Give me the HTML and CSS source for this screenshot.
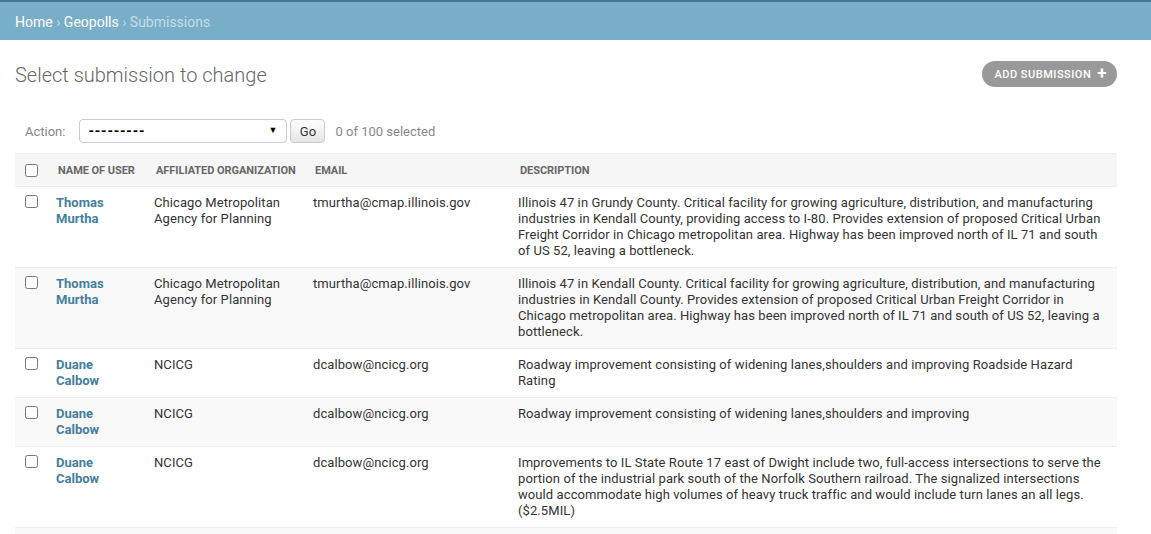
FILE: index.html
```html
<!DOCTYPE html>
<html lang="en">
<head>
<meta charset="utf-8">
<title>Select submission to change</title>
<link rel="stylesheet" href="styles.css">
</head>
<body>
<div class="topline"></div>
<div class="breadcrumbs">
  <a href="#">Home</a> › <a href="#">Geopolls</a> › Submissions
</div>
<div class="content">
  <div class="title-row">
    <h1>Select submission to change</h1>
    <a class="addlink" href="#">Add submission <span class="plus">+</span></a>
  </div>
  <div class="actions">
    <label class="action-label">Action:</label>
    <div class="select-wrap">
      <select class="action-select">
        <option>---------</option>
      </select>
      <span class="select-arrow">▼</span>
    </div>
    <button class="go-button" type="button">Go</button>
    <span class="counter">0 of 100 selected</span>
  </div>
  <table class="result-list">
    <colgroup>
      <col class="c-check">
      <col class="c-name">
      <col class="c-org">
      <col class="c-email">
      <col class="c-desc">
    </colgroup>
    <thead>
      <tr>
        <th class="check-head"><input type="checkbox"></th>
        <th>Name of user</th>
        <th>Affiliated organization</th>
        <th>Email</th>
        <th>Description</th>
      </tr>
    </thead>
    <tbody>
      <tr class="row1">
        <td class="check-cell"><input type="checkbox"></td>
        <th class="name-cell"><a href="#">Thomas Murtha</a></th>
        <td>Chicago Metropolitan Agency for Planning</td>
        <td>tmurtha@cmap.illinois.gov</td>
        <td>Illinois 47 in Grundy County. Critical facility for growing agriculture, distribution, and manufacturing industries in Kendall County, providing access to I-80. Provides extension of proposed Critical Urban Freight Corridor in Chicago metropolitan area. Highway has been improved north of IL 71 and south of US 52, leaving a bottleneck.</td>
      </tr>
      <tr class="row2">
        <td class="check-cell"><input type="checkbox"></td>
        <th class="name-cell"><a href="#">Thomas Murtha</a></th>
        <td>Chicago Metropolitan Agency for Planning</td>
        <td>tmurtha@cmap.illinois.gov</td>
        <td>Illinois 47 in Kendall County. Critical facility for growing agriculture, distribution, and manufacturing industries in Kendall County. Provides extension of proposed Critical Urban Freight Corridor in Chicago metropolitan area. Highway has been improved north of IL 71 and south of US 52, leaving a bottleneck.</td>
      </tr>
      <tr class="row1">
        <td class="check-cell"><input type="checkbox"></td>
        <th class="name-cell"><a href="#">Duane Calbow</a></th>
        <td>NCICG</td>
        <td>dcalbow@ncicg.org</td>
        <td>Roadway improvement consisting of widening lanes,shoulders and improving Roadside Hazard Rating</td>
      </tr>
      <tr class="row2">
        <td class="check-cell"><input type="checkbox"></td>
        <th class="name-cell"><a href="#">Duane Calbow</a></th>
        <td>NCICG</td>
        <td>dcalbow@ncicg.org</td>
        <td>Roadway improvement consisting of widening lanes,shoulders and improving</td>
      </tr>
      <tr class="row1">
        <td class="check-cell"><input type="checkbox"></td>
        <th class="name-cell"><a href="#">Duane Calbow</a></th>
        <td>NCICG</td>
        <td>dcalbow@ncicg.org</td>
        <td>Improvements to IL State Route 17 east of Dwight include two, full-access intersections to serve the portion of the industrial park south of the Norfolk Southern railroad. The signalized intersections would accommodate high volumes of heavy truck traffic and would include turn lanes an all legs. ($2.5MIL)</td>
      </tr>
      <tr class="row2">
        <td class="check-cell"><input type="checkbox"></td>
        <th class="name-cell"><a href="#">Duane Calbow</a></th>
        <td>NCICG</td>
        <td>dcalbow@ncicg.org</td>
        <td>Roadway improvement consisting of widening lanes and shoulders</td>
      </tr>
    </tbody>
  </table>
</div>
</body>
</html>
```
FILE: styles.css
```css
html, body {
  margin: 0;
  padding: 0;
  background: #fff;
}
body {
  font-family: Roboto, "Lucida Grande", Verdana, Arial, sans-serif;
  font-size: 14px;
  color: #333;
}
a {
  text-decoration: none;
}
.topline {
  height: 2px;
  background: #417690;
}
.breadcrumbs {
  background: #79aec8;
  color: #c4dce8;
  padding: 11px 15px 9px;
  font-size: 14px;
  line-height: 18px;
}
.breadcrumbs a {
  color: #fff;
}
.content {
  padding: 22px 34px 0 15px;
}
.title-row {
  display: flex;
  align-items: center;
  justify-content: space-between;
  height: 26px;
  margin-bottom: 21px;
}
h1 {
  margin: 0;
  font-size: 20px;
  font-weight: 300;
  color: #666;
  line-height: 24px;
}
.addlink {
  display: flex;
  align-items: center;
  height: 26px;
  padding: 0 10px 0 12px;
  background: #999;
  color: #fff;
  border-radius: 13px;
  font-size: 11px;
  font-weight: 500;
  text-transform: uppercase;
  letter-spacing: 0.5px;
  position: relative;
  top: -1px;
}
.plus {
  margin-left: 6px;
  font-size: 17px;
  font-weight: 700;
  line-height: 1;
  position: relative;
  top: -1px;
}
.actions {
  display: flex;
  align-items: center;
  padding: 10px;
  height: 24px;
  color: #888;
  font-size: 13px;
}
.action-label {
  color: #888;
}
.select-wrap {
  position: relative;
  margin-left: 14px;
}
.action-select {
  -webkit-appearance: none;
  appearance: none;
  width: 208px;
  height: 24px;
  border: 1px solid #ccc;
  border-radius: 4px;
  background: #fff;
  color: #000;
  font-family: Roboto, Arial, sans-serif;
  font-size: 14px;
  font-weight: 700;
  letter-spacing: 0.8px;
  padding: 0 0 0 8px;
  margin: 0;
  display: block;
}
.select-arrow {
  position: absolute;
  right: 10px;
  top: 6px;
  font-size: 9px;
  color: #000;
  pointer-events: none;
}
.go-button {
  margin-left: 3px;
  height: 24px;
  width: 35px;
  padding: 0;
  font-family: Roboto, Arial, sans-serif;
  font-size: 13px;
  color: #333;
  border: 1px solid #ccc;
  border-radius: 4px;
  background: #fff;
  box-shadow: 0 -15px 20px -10px rgba(0, 0, 0, 0.15) inset;
}
.counter {
  margin-left: 10px;
  color: #888;
}
.result-list {
  width: 1102px;
  table-layout: fixed;
  border-collapse: collapse;
  font-size: 13px;
  line-height: 16px;
}
.c-check { width: 33px; }
.c-name { width: 98px; }
.c-org { width: 159px; }
.c-email { width: 205px; }
.c-desc { width: 607px; }
thead th {
  background: #f6f6f6;
  color: #666;
  font-size: 11px;
  font-weight: 700;
  text-transform: uppercase;
  text-align: left;
  padding: 10px 10px 9px;
  line-height: 13px;
  border-top: 1px solid #eee;
  border-bottom: 1px solid #eee;
  white-space: nowrap;
  letter-spacing: -0.05px;
}
thead th.check-head {
  padding: 9px 8px 8px 10px;
}
input[type=checkbox] {
  margin: 0;
  width: 13px;
  height: 13px;
  vertical-align: top;
}
tbody td, tbody th {
  padding: 8px;
  text-align: left;
  vertical-align: top;
  border-bottom: 1px solid #eee;
  font-weight: 400;
  letter-spacing: 0.09px;
}
tbody td.check-cell {
  padding-left: 10px;
}
tbody th.name-cell {
  font-weight: 700;
  letter-spacing: 0;
}
.name-cell a {
  color: #447e9b;
}
tr.row1 { background: #fff; }
tr.row2 { background: #f9f9f9; }
```
